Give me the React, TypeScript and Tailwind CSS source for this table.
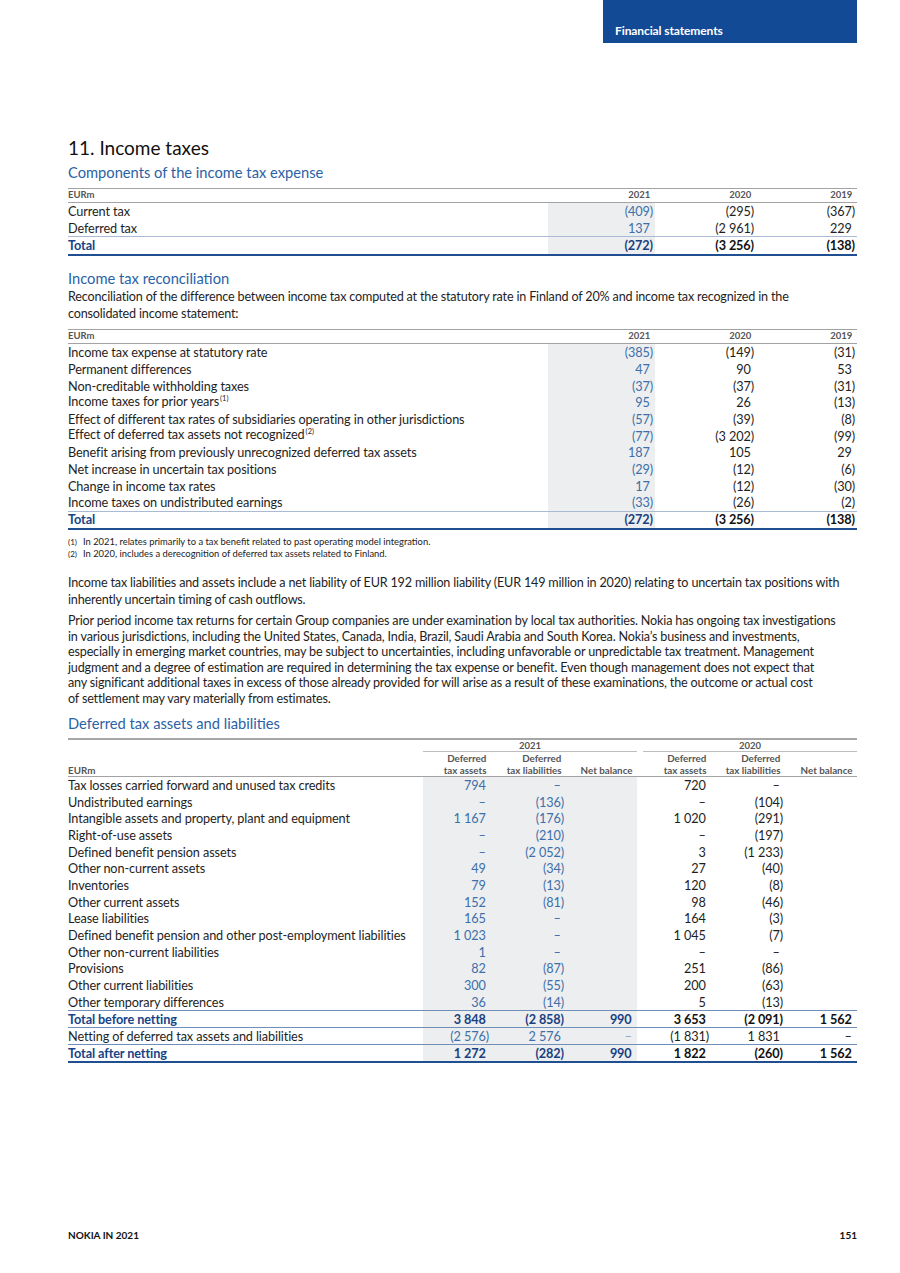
import React from "react";

const BLUE_NUM = "text-[#3d6ea9]";
const BLUE_TOTAL = "text-[#1a3f80]";

function Num({ v }: { v: string }) {
  const paren = v.endsWith(")");
  return (
    <span className="whitespace-pre">
      {v}
      {!paren && <span className="invisible">)</span>}
    </span>
  );
}

type R12 = { label: React.ReactNode; v: [string, string, string] };

function Table12({ rows, total }: { rows: R12[]; total: [string, string, string] }) {
  return (
    <div className="flex flex-col text-[12.7px] tracking-[-0.11px]">
      <div className="flex h-[15px] border-t border-b border-[#a3a3a3] items-center text-[9.5px] tracking-normal font-bold text-[#555]">
        <div className="w-[480px]">EURm</div>
        <div className="w-[107px] flex justify-end pr-[2px]"><Num v="2021" /></div>
        <div className="w-[101px] flex justify-end pr-[2px]"><Num v="2020" /></div>
        <div className="w-[101px] flex justify-end pr-[2px]"><Num v="2019" /></div>
      </div>
      {rows.map((r, i) => (
        <div key={i} className="flex h-[16.67px] items-center leading-[16px]">
          <div className="w-[480px] whitespace-nowrap">{r.label}</div>
          <div className={`w-[107px] h-full flex items-center justify-end pr-[2px] bg-[#eceef0] ${BLUE_NUM}`}><Num v={r.v[0]} /></div>
          <div className="w-[101px] flex justify-end pr-[2px]"><Num v={r.v[1]} /></div>
          <div className="w-[101px] flex justify-end pr-[2px]"><Num v={r.v[2]} /></div>
        </div>
      ))}
      <div className="flex h-[19.67px] items-stretch border-t border-t-[#a9bbd4] border-b-2 border-b-[#1f4f90] font-bold">
        <div className="w-[480px] flex items-center text-[#154487]">Total</div>
        <div className={`w-[107px] flex items-center justify-end pr-[2px] bg-[#eceef0] ${BLUE_TOTAL}`}><Num v={total[0]} /></div>
        <div className="w-[101px] flex items-center justify-end pr-[2px] text-[#111]"><Num v={total[1]} /></div>
        <div className="w-[101px] flex items-center justify-end pr-[2px] text-[#111]"><Num v={total[2]} /></div>
      </div>
    </div>
  );
}

const Sup = ({ n }: { n: string }) => (
  <span className="relative top-[-5px] text-[7.5px] ml-[1px] tracking-normal">({n})</span>
);

const t1: R12[] = [
  { label: "Current tax", v: ["(409)", "(295)", "(367)"] },
  { label: "Deferred tax", v: ["137", "(2 961)", "229"] },
];

const t2: R12[] = [
  { label: "Income tax expense at statutory rate", v: ["(385)", "(149)", "(31)"] },
  { label: "Permanent differences", v: ["47", "90", "53"] },
  { label: "Non-creditable withholding taxes", v: ["(37)", "(37)", "(31)"] },
  { label: <>Income taxes for prior years<Sup n="1" /></>, v: ["95", "26", "(13)"] },
  { label: "Effect of different tax rates of subsidiaries operating in other jurisdictions", v: ["(57)", "(39)", "(8)"] },
  { label: <>Effect of deferred tax assets not recognized<Sup n="2" /></>, v: ["(77)", "(3 202)", "(99)"] },
  { label: "Benefit arising from previously unrecognized deferred tax assets", v: ["187", "105", "29"] },
  { label: "Net increase in uncertain tax positions", v: ["(29)", "(12)", "(6)"] },
  { label: "Change in income tax rates", v: ["17", "(12)", "(30)"] },
  { label: "Income taxes on undistributed earnings", v: ["(33)", "(26)", "(2)"] },
];

type R3 = [string, string, string, string, string, string, string];

const t3: R3[] = [
  ["Tax losses carried forward and unused tax credits", "794", "–", "", "720", "–", ""],
  ["Undistributed earnings", "–", "(136)", "", "–", "(104)", ""],
  ["Intangible assets and property, plant and equipment", "1 167", "(176)", "", "1 020", "(291)", ""],
  ["Right-of-use assets", "–", "(210)", "", "–", "(197)", ""],
  ["Defined benefit pension assets", "–", "(2 052)", "", "3", "(1 233)", ""],
  ["Other non-current assets", "49", "(34)", "", "27", "(40)", ""],
  ["Inventories", "79", "(13)", "", "120", "(8)", ""],
  ["Other current assets", "152", "(81)", "", "98", "(46)", ""],
  ["Lease liabilities", "165", "–", "", "164", "(3)", ""],
  ["Defined benefit pension and other post-employment liabilities", "1 023", "–", "", "1 045", "(7)", ""],
  ["Other non-current liabilities", "1", "–", "", "–", "–", ""],
  ["Provisions", "82", "(87)", "", "251", "(86)", ""],
  ["Other current liabilities", "300", "(55)", "", "200", "(63)", ""],
  ["Other temporary differences", "36", "(14)", "", "5", "(13)", ""],
];

const W3 = ["w-[68px]", "w-[75px]", "w-[71px]", "w-[74px]", "w-[74px]", "w-[72px]"];

function Row3({ r, kind }: { r: R3; kind: "normal" | "total" | "net" | "final" }) {
  const bold = kind === "total" || kind === "final";
  const cls =
    kind === "total"
      ? "h-[18px] border-t border-b border-[#6f8fba]"
      : kind === "net"
      ? "h-[17px] border-b border-[#6f8fba]"
      : kind === "final"
      ? "h-[18px] border-b-2 border-[#1f4f90]"
      : "h-[16.67px]";
  return (
    <div className={`flex items-stretch ${cls} ${bold ? "font-bold" : ""}`}>
      <div className={`w-[355px] flex items-center whitespace-nowrap ${bold ? "text-[#154487]" : ""}`}>{r[0]}</div>
      {r.slice(1).map((v, i) => {
        const shaded = i < 3;
        const color = shaded
          ? bold
            ? BLUE_TOTAL
            : v === "–" && kind === "net"
            ? "text-[#8da6c6]"
            : BLUE_NUM
          : bold
          ? "text-[#111]"
          : "";
        return (
          <div
            key={i}
            className={`${W3[i]} flex items-center justify-end pr-[2px] ${shaded ? "bg-[#eceef0]" : ""} ${color}`}
          >
            {v !== "" && <Num v={v} />}
          </div>
        );
      })}
    </div>
  );
}

function Hdr3({ a, b }: { a: string; b: string }) {
  return (
    <div className="flex flex-col items-end leading-[12px] whitespace-nowrap">
      <span className="pr-[2px]">{a}<span className="invisible">)</span></span>
      <span className="pr-[2px]">{b}<span className="invisible">)</span></span>
    </div>
  );
}

const P = "text-[12.6px] tracking-[-0.175px]";

export default function App() {
  return (
    <div className="w-[900px] h-[1273px] bg-white flex flex-col text-[#1e1e1e] [font-family:Lato,'Open_Sans',sans-serif]">
      <div className="flex justify-end pr-[43px]">
        <div className="w-[254px] h-[43px] bg-[#124a96] flex items-end pl-[12px] pb-[5px]">
          <span className="text-white font-bold text-[12px] leading-[14px] tracking-[-0.1px]">Financial statements</span>
        </div>
      </div>

      <div className="pl-[68px] pr-[43px] flex flex-col">
        <h1 className="mt-[93px] text-[19px] leading-[24px] text-[#111]">11. Income taxes</h1>
        <h2 className="mt-[2px] text-[14.7px] leading-[20px] text-[#2a62a6]">Components of the income tax expense</h2>
        <div className="mt-[6px]">
          <Table12 rows={t1} total={["(272)", "(3 256)", "(138)"]} />
        </div>

        <h2 className="mt-[13px] text-[14.7px] leading-[19px] text-[#2a62a6]">Income tax reconciliation</h2>
        <p className={`${P} leading-[17px]`}>
          <span className="block whitespace-nowrap">Reconciliation of the difference between income tax computed at the statutory rate in Finland of 20% and income tax recognized in the</span>
          <span className="block whitespace-nowrap">consolidated income statement:</span>
        </p>
        <div className="mt-[7px]">
          <Table12 rows={t2} total={["(272)", "(3 256)", "(138)"]} />
        </div>

        <div className="mt-[6px] flex flex-col text-[9.4px] leading-[12px] text-[#222]">
          <div className="flex"><span className="w-[15px] text-[8px]">(1)</span><span>In 2021, relates primarily to a tax benefit related to past operating model integration.</span></div>
          <div className="flex"><span className="w-[15px] text-[8px]">(2)</span><span>In 2020, includes a derecognition of deferred tax assets related to Finland.</span></div>
        </div>

        <p className={`mt-[14px] ${P} leading-[17px]`}>
          <span className="block whitespace-nowrap">Income tax liabilities and assets include a net liability of EUR 192 million liability (EUR 149 million in 2020) relating to uncertain tax positions with</span>
          <span className="block whitespace-nowrap">inherently uncertain timing of cash outflows.</span>
        </p>
        <p className={`mt-[5px] ${P} leading-[15.5px]`}>
          <span className="block whitespace-nowrap">Prior period income tax returns for certain Group companies are under examination by local tax authorities. Nokia has ongoing tax investigations</span>
          <span className="block whitespace-nowrap">in various jurisdictions, including the United States, Canada, India, Brazil, Saudi Arabia and South Korea. Nokia’s business and investments,</span>
          <span className="block whitespace-nowrap">especially in emerging market countries, may be subject to uncertainties, including unfavorable or unpredictable tax treatment. Management</span>
          <span className="block whitespace-nowrap">judgment and a degree of estimation are required in determining the tax expense or benefit. Even though management does not expect that</span>
          <span className="block whitespace-nowrap">any significant additional taxes in excess of those already provided for will arise as a result of these examinations, the outcome or actual cost</span>
          <span className="block whitespace-nowrap">of settlement may vary materially from estimates.</span>
        </p>

        <h2 className="mt-[7px] text-[14.7px] leading-[20px] text-[#2a62a6]">Deferred tax assets and liabilities</h2>

        <div className="mt-[5px] flex flex-col text-[12.7px] tracking-[-0.11px]">
          <div className="flex h-[14px] border-t-2 border-[#a6a6a6] text-[9.5px] tracking-normal font-bold text-[#555]">
            <div className="w-[355px]" />
            <div className="w-[214px] border-b border-[#bdbdbd] flex items-center justify-center leading-[10px]">2021</div>
            <div className="w-[6px]" />
            <div className="w-[214px] border-b border-[#bdbdbd] flex items-center justify-center leading-[10px]">2020</div>
          </div>
          <div className="flex h-[25px] border-b border-[#a3a3a3] text-[9.8px] tracking-normal font-bold text-[#555] items-end">
            <div className="w-[355px] leading-[12px]">EURm</div>
            <div className={W3[0]}><Hdr3 a="Deferred" b="tax assets" /></div>
            <div className={W3[1]}><Hdr3 a="Deferred" b="tax liabilities" /></div>
            <div className={W3[2]}><Hdr3 a="" b="Net balance" /></div>
            <div className={W3[3]}><Hdr3 a="Deferred" b="tax assets" /></div>
            <div className={W3[4]}><Hdr3 a="Deferred" b="tax liabilities" /></div>
            <div className={W3[5]}><Hdr3 a="" b="Net balance" /></div>
          </div>
          {t3.map((r, i) => (
            <Row3 key={i} r={r} kind="normal" />
          ))}
          <Row3 r={["Total before netting", "3 848", "(2 858)", "990", "3 653", "(2 091)", "1 562"]} kind="total" />
          <Row3 r={["Netting of deferred tax assets and liabilities", "(2 576)", "2 576", "–", "(1 831)", "1 831", "–"]} kind="net" />
          <Row3 r={["Total after netting", "1 272", "(282)", "990", "1 822", "(260)", "1 562"]} kind="final" />
        </div>
      </div>

      <div className="mt-auto pb-[31px] pl-[68px] pr-[43px] flex justify-between text-[10px] leading-[14px] font-bold text-[#111]">
        <span>NOKIA IN 2021</span>
        <span>151</span>
      </div>
    </div>
  );
}
